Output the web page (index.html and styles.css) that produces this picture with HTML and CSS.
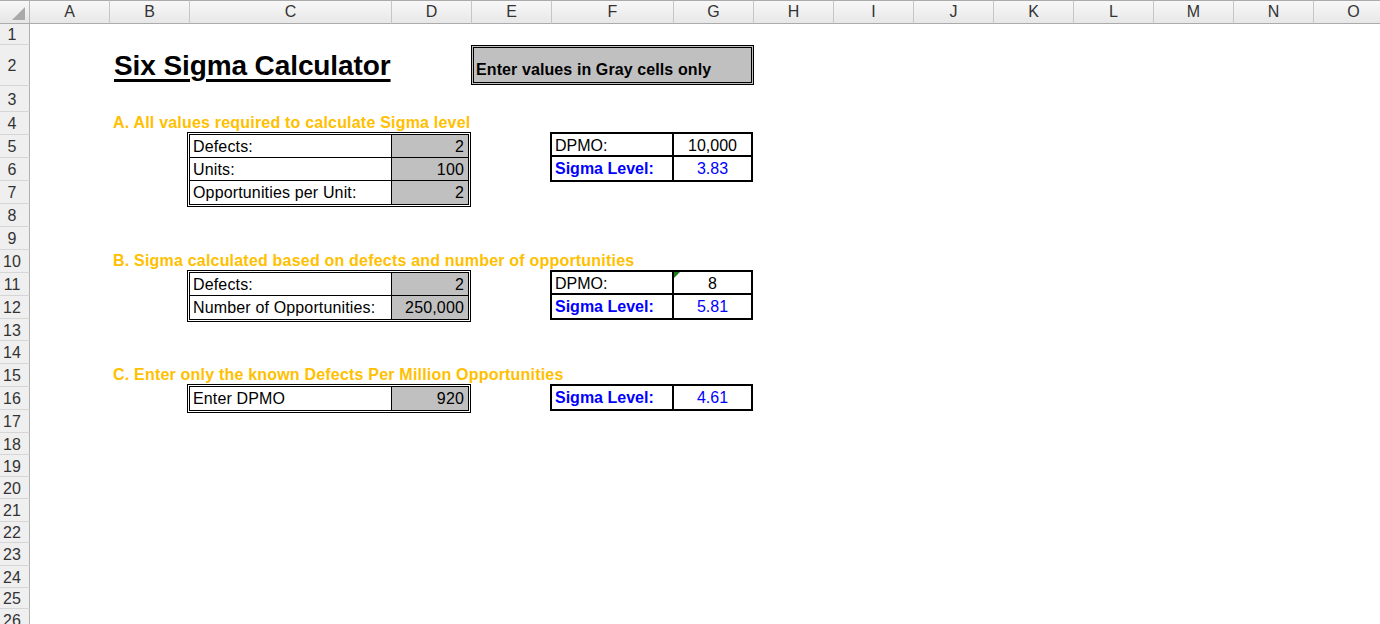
FILE: index.html
```html
<!DOCTYPE html>
<html lang="en">
<head>
    <meta charset="UTF-8">
    <title>Six Sigma Calculator</title>
    <link rel="stylesheet" href="styles.css">
</head>
<body>

<div class="sheet">
    <!-- Kopfzeile -->
    <div class="corner">
        <svg width="30" height="24" viewBox="0 0 30 24"><polygon points="25,7 25,20 12,20" fill="#a9a9a9"/></svg>
    </div>
    <div class="ch">A</div>
    <div class="ch">B</div>
    <div class="ch">C</div>
    <div class="ch">D</div>
    <div class="ch">E</div>
    <div class="ch">F</div>
    <div class="ch">G</div>
    <div class="ch">H</div>
    <div class="ch">I</div>
    <div class="ch">J</div>
    <div class="ch">K</div>
    <div class="ch">L</div>
    <div class="ch">M</div>
    <div class="ch">N</div>
    <div class="ch">O</div>

    <!-- Zeilennummern -->
    <div class="rh">1</div>
    <div class="rh">2</div>
    <div class="rh">3</div>
    <div class="rh">4</div>
    <div class="rh">5</div>
    <div class="rh">6</div>
    <div class="rh">7</div>
    <div class="rh">8</div>
    <div class="rh">9</div>
    <div class="rh">10</div>
    <div class="rh">11</div>
    <div class="rh">12</div>
    <div class="rh">13</div>
    <div class="rh">14</div>
    <div class="rh">15</div>
    <div class="rh">16</div>
    <div class="rh">17</div>
    <div class="rh">18</div>
    <div class="rh">19</div>
    <div class="rh">20</div>
    <div class="rh">21</div>
    <div class="rh">22</div>
    <div class="rh">23</div>
    <div class="rh">24</div>
    <div class="rh">25</div>
    <div class="rh">26</div>

    <!-- Inhalt -->
    <div class="title"><span>Six Sigma Calculator</span></div>
    <div class="notice">Enter values in Gray cells only</div>

    <div class="heading h-a">A. All values required to calculate Sigma level</div>
    <div class="inputs in-a">
        <div class="lbl">Defects:</div><div class="val">2</div>
        <div class="lbl">Units:</div><div class="val">100</div>
        <div class="lbl last">Opportunities per Unit:</div><div class="val last">2</div>
    </div>
    <div class="result res-a">
        <div class="lbl">DPMO:</div><div class="val">10,000</div>
        <div class="lbl sigma last">Sigma Level:</div><div class="val blue last">3.83</div>
    </div>

    <div class="heading h-b">B. Sigma calculated based on defects and number of opportunities</div>
    <div class="inputs in-b">
        <div class="lbl">Defects:</div><div class="val">2</div>
        <div class="lbl last">Number of Opportunities:</div><div class="val last">250,000</div>
    </div>
    <div class="result res-b">
        <div class="lbl">DPMO:</div><div class="val flag">8</div>
        <div class="lbl sigma last">Sigma Level:</div><div class="val blue last">5.81</div>
    </div>

    <div class="heading h-c">C. Enter only the known Defects Per Million Opportunities</div>
    <div class="inputs in-c">
        <div class="lbl last">Enter DPMO</div><div class="val last">920</div>
    </div>
    <div class="result res-c">
        <div class="lbl sigma last">Sigma Level:</div><div class="val blue last">4.61</div>
    </div>
</div>

</body>
</html>
```

FILE: styles.css
```css
html, body {
    margin: 0;
    padding: 0;
    width: 1380px;
    height: 624px;
    overflow: hidden;
    background: #fff;
    font-family: "Liberation Sans", Arial, sans-serif;
    color: #000;
}

.sheet {
    display: grid;
    grid-template-columns: 30px 80px 80px 202px 80px 80px 122px 80px 80px 80px 80px 80px 80px 80px 80px 80px;
    grid-template-rows: 24px 21px 41px 26px repeat(9, 23px) 22px repeat(4, 23px) 22px 22px 22px 23px 21px 23px 22px 21px 23px;
    width: 1394px;
}

/* Spalten- und Zeilenköpfe */
.corner {
    background: linear-gradient(#f7f7f7, #e6e6e6);
    border-top: 1px solid #ababab;
    border-bottom: 1px solid #ababab;
    border-right: 1px solid #b8b8b8;
    box-sizing: border-box;
    overflow: hidden;
}

.corner svg {
    display: block;
    margin-top: -1px;
}

.ch {
    display: flex;
    align-items: center;
    justify-content: center;
    background: linear-gradient(#f8f8f8, #e7e7e7);
    border-top: 1px solid #ababab;
    border-bottom: 1px solid #ababab;
    border-right: 1px solid #c6c6c6;
    box-sizing: border-box;
    font-size: 16px;
    color: #333;
}

.rh {
    grid-column: 1;
    display: flex;
    align-items: center;
    justify-content: center;
    padding-right: 5px;
    padding-top: 2px;
    background: #efefef;
    border-right: 1px solid #b1b1b1;
    border-bottom: 1px solid #d6d6d6;
    box-sizing: border-box;
    font-size: 16px;
    color: #333;
}

/* Titel */
.title {
    grid-column: 3 / 6;
    grid-row: 3;
    padding-left: 4px;
    padding-top: 5px;
    font-size: 28px;
    line-height: 32px;
    font-weight: bold;
    letter-spacing: -0.1px;
    white-space: nowrap;
}

.title span {
    text-decoration: underline;
    text-decoration-thickness: 3px;
    text-underline-offset: 4px;
}

.notice {
    grid-column: 6 / 9;
    grid-row: 3;
    align-self: start;
    margin-left: -1px;
    height: 40px;
    box-sizing: border-box;
    border: 3px double #000;
    background: #c0c0c0;
    display: flex;
    align-items: flex-end;
    padding: 0 0 2px 2px;
    font-size: 16px;
    line-height: 20px;
    font-weight: bold;
    letter-spacing: 0.1px;
    white-space: nowrap;
}

/* Abschnittsüberschriften */
.heading {
    grid-column: 3 / 10;
    padding-left: 3px;
    font-size: 16px;
    line-height: 22px;
    font-weight: bold;
    letter-spacing: 0.2px;
    color: #ffc000;
    white-space: nowrap;
}

.h-a { grid-row: 5; }
.h-b { grid-row: 11; }
.h-c { grid-row: 16; }

/* Eingabetabellen */
.inputs {
    grid-column: 4 / 6;
    align-self: start;
    margin: -3px 1px 0 -3px;
    display: grid;
    grid-template-columns: 1fr 77px;
    grid-auto-rows: 23px;
    border: 3px double #000;
    font-size: 16px;
    line-height: 22px;
    letter-spacing: 0.15px;
}

.inputs .lbl,
.inputs .val {
    border-bottom: 1px solid #000;
    padding-top: 1px;
    white-space: nowrap;
}

.inputs .lbl {
    padding-left: 3px;
}

.inputs .val {
    border-left: 1px solid #000;
    background: #c0c0c0;
    text-align: right;
    padding-right: 4px;
}

.inputs .last {
    border-bottom: none;
}

.in-a { grid-row: 6 / 9; }
.in-b { grid-row: 12 / 14; }
.in-c { grid-row: 17; }

/* Ergebnisboxen */
.result {
    grid-column: 7 / 9;
    align-self: start;
    margin: -3px 1px 0 -2px;
    display: grid;
    grid-template-columns: 122px 1fr;
    grid-auto-rows: 23px;
    border: 2px solid #000;
    font-size: 16px;
    line-height: 21px;
}

.result .lbl,
.result .val {
    border-bottom: 2px solid #000;
    padding-top: 1px;
    white-space: nowrap;
}

.result .lbl {
    border-right: 2px solid #000;
    padding-left: 3px;
}

.result .val {
    text-align: center;
}

.result .last {
    border-bottom: none;
}

.result .sigma {
    color: #0000ff;
    font-weight: bold;
}

.result .blue {
    color: #0000ff;
}

.result .flag {
    position: relative;
}

/* grünes Fehlerdreieck */
.result .flag::before {
    content: "";
    position: absolute;
    top: 0;
    left: 0;
    border-top: 6px solid #1e7b1e;
    border-right: 6px solid transparent;
}

.res-a { grid-row: 6 / 8; }
.res-b { grid-row: 12 / 14; }
.res-c { grid-row: 17; }
```
